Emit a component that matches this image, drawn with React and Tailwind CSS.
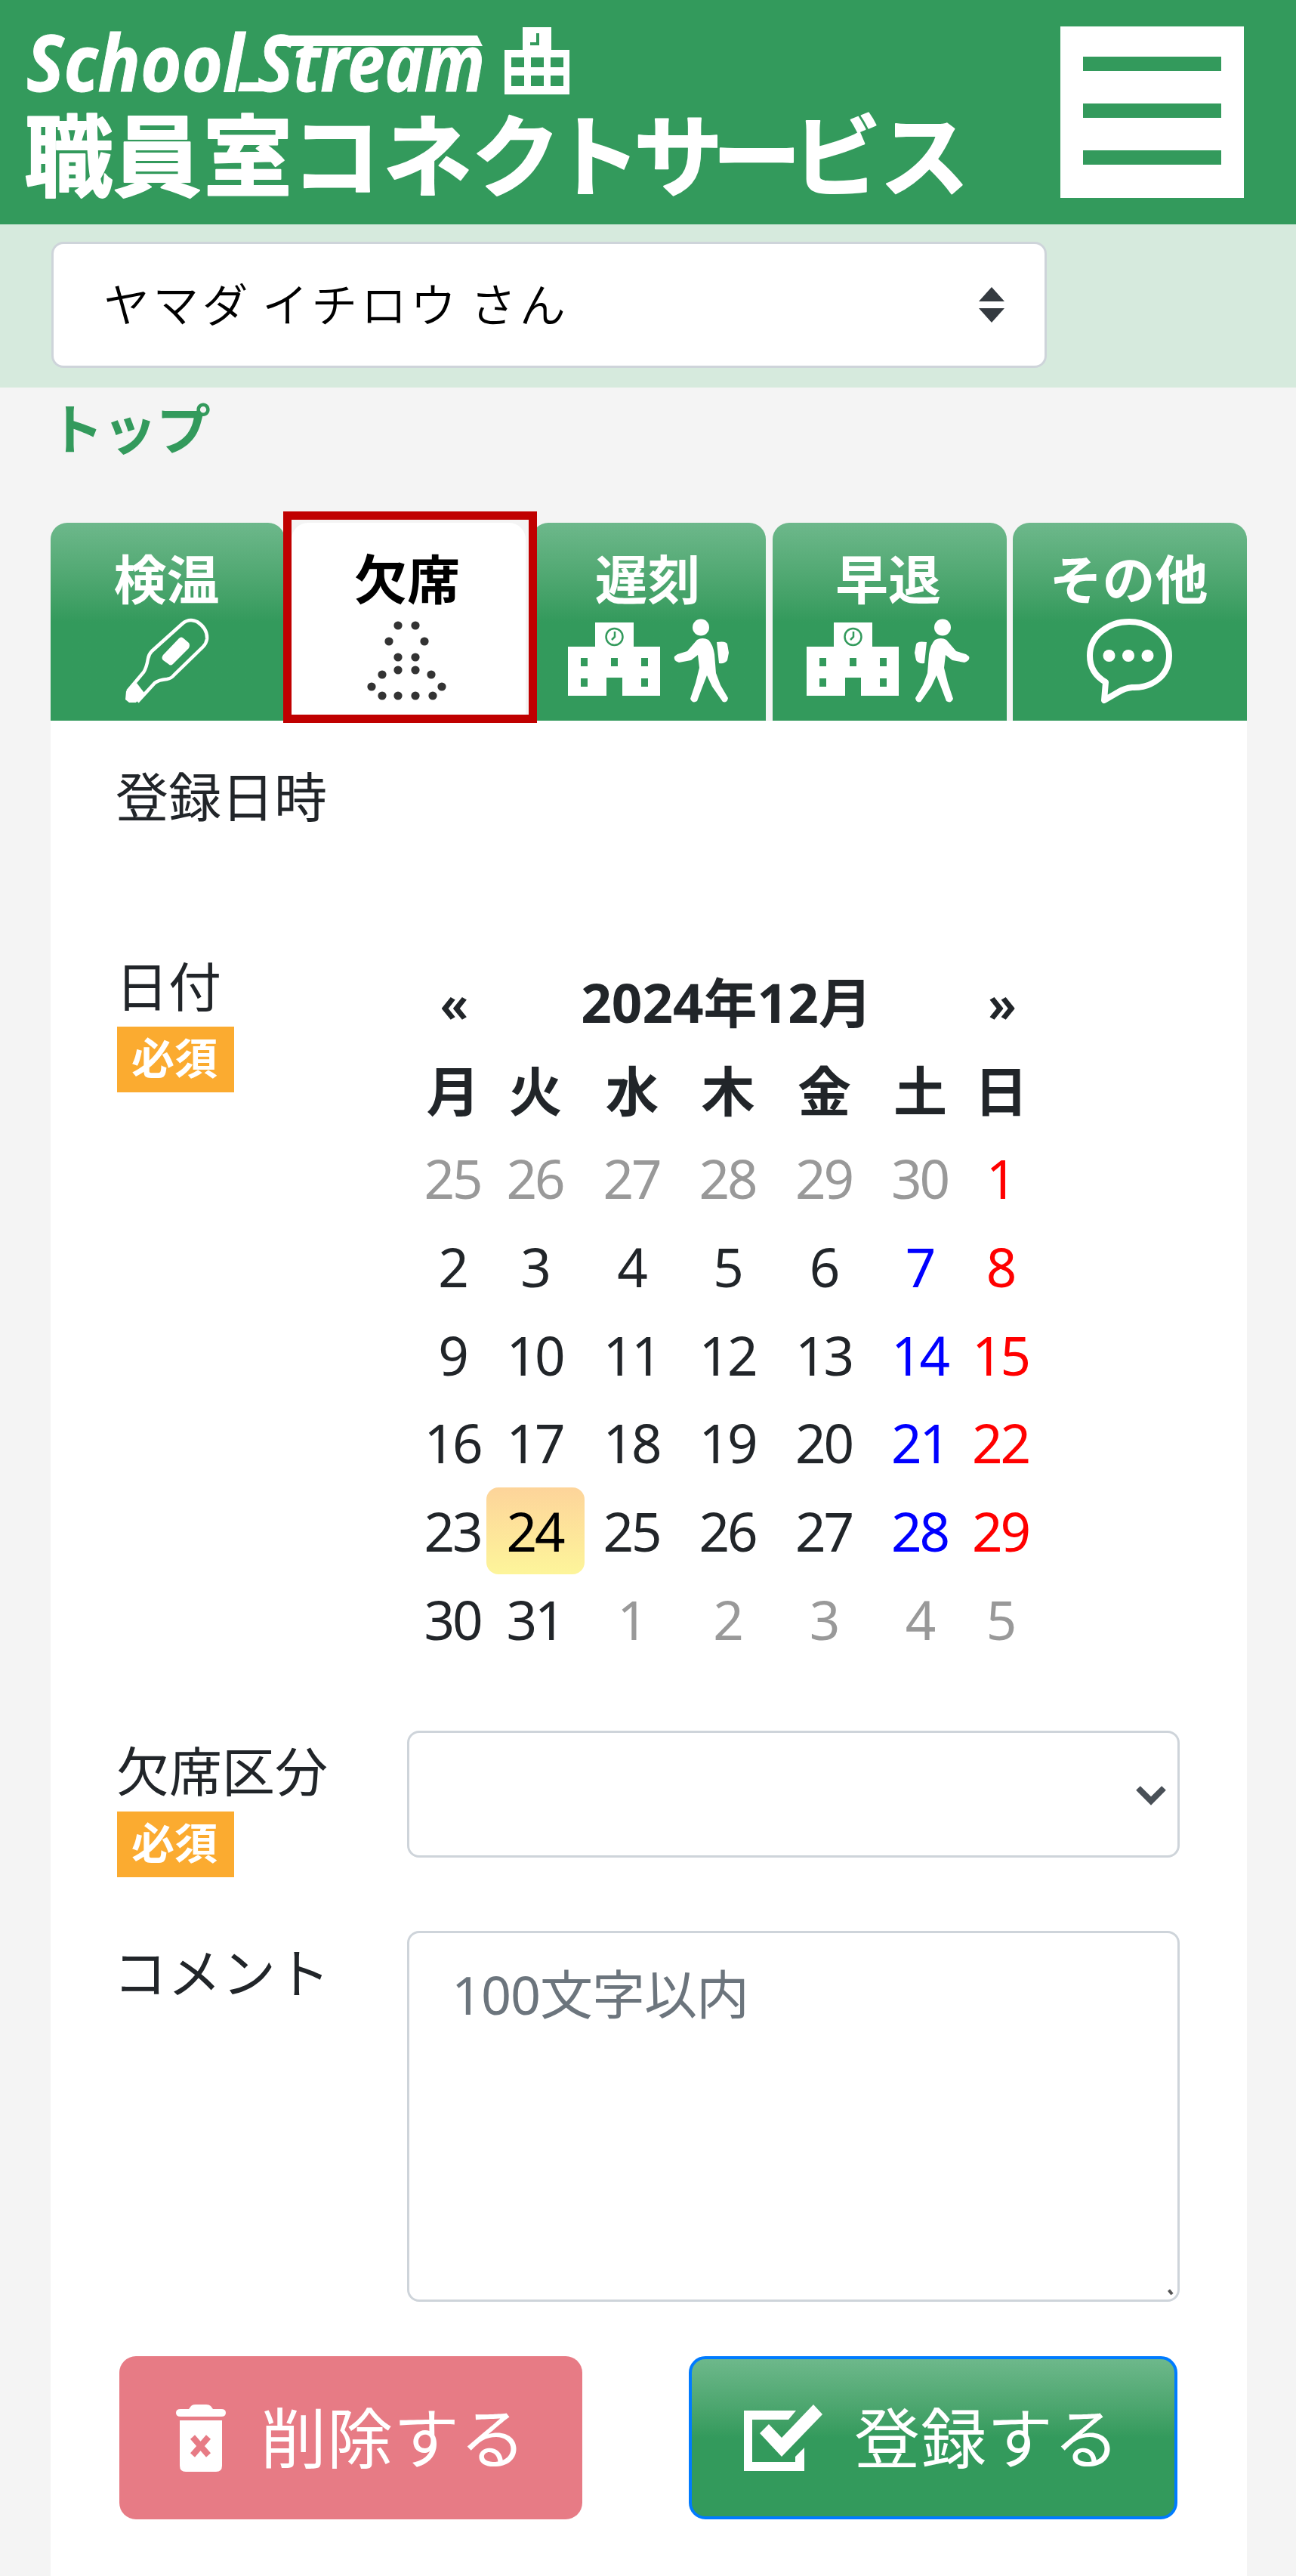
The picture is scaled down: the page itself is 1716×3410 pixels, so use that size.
import React, { useState } from 'react';

const DAY_NAMES = ['月', '火', '水', '木', '金', '土', '日'];

const WEEKS = [
  [25, 26, 27, 28, 29, 30, 1],
  [2, 3, 4, 5, 6, 7, 8],
  [9, 10, 11, 12, 13, 14, 15],
  [16, 17, 18, 19, 20, 21, 22],
  [23, 24, 25, 26, 27, 28, 29],
  [30, 31, 1, 2, 3, 4, 5],
];

function Logo() {
  return (
    <svg width="1290" height="297" viewBox="0 0 1290 297" fill="#fff" stroke="#fff" strokeWidth="0">
      <g fontFamily="'Noto Sans', sans-serif" fontWeight="700" fontStyle="italic" fontSize="104" strokeWidth="1">
        <text x="35" y="121" textLength="288" lengthAdjust="spacingAndGlyphs">School</text>
        <text x="341" y="121" textLength="301" lengthAdjust="spacingAndGlyphs">Stream</text>
      </g>
      {/* Bars running out of the S */}
      <path d="M370 47H632L639 61H362Z" />
      <path d="M318 109H366V121H315Z" />
      {/* School building */}
      <path
        fillRule="evenodd"
        d="M692 36H730V66H754V125H668V66H692ZM710 44V56H702V60H714V44ZM677 76V89H694V76ZM703 76V89H720V76ZM729 76V89H746V76ZM677 100V114H694V100ZM703 100V114H720V100ZM729 100V114H746V100Z"
      />
      <text
        y="251"
        x="32 149 269 386 507 624 730 839 943 1049 1165"
        fontFamily="'Noto Sans CJK JP', sans-serif"
        fontWeight="700"
        fontSize="118"
        strokeWidth="2"
        strokeLinejoin="round"
      >
        職員室コネクトサービス
      </text>
    </svg>
  );
}

function ThermometerIcon() {
  return (
    <svg width="112" height="114" viewBox="164 820 112 114" fill="none">
      <path
        d="M168 917L189 892Q193 886 195 874Q196 868 200 864L240 828Q249 820 260 825Q274 834 273 848Q272 854 268 858L229 896Q226 900 220 901Q209 902 204 906L181 931"
        stroke="#fff"
        strokeWidth="4.5"
      />
      <path d="M166 917L180 906L186 914L190 919L179 932H170L165 928Z" fill="#fff" />
      <path d="M215 869L236 847Q239 844 242 847L249 853Q251 856 249 860L228 881Q225 884 222 881L215 876Q212 873 215 869Z" fill="#fff" />
    </svg>
  );
}

function AbsenceIcon() {
  const dots = [
    [527, 830], [550, 830], [515, 851], [562, 851], [527, 872], [550, 872],
    [527, 889], [550, 889], [506, 895], [571, 895], [492, 911], [585, 911],
    [506, 923], [527, 923], [550, 923], [573, 923],
  ];
  return (
    <svg width="112" height="114" viewBox="483 820 112 114" fill="#333">
      {dots.map(([cx, cy]) => (
        <circle key={cx + '-' + cy} cx={cx} cy={cy} r="5.6" />
      ))}
    </svg>
  );
}

function SchoolIcon() {
  return (
    <svg width="124" height="114" viewBox="749 820 124 114" fill="#fff">
      <path
        fillRule="evenodd"
        d="M786 826H837V858H872V923H822V899H801V923H750V858H786ZM767 873V884H776V873ZM807 873V884H816V873ZM847 873V884H856V873ZM767 900V911H776V900ZM847 900V911H856V900Z"
      />
      <circle cx="811.5" cy="845" r="11" fill="none" stroke="#339a5c" strokeWidth="2.5" />
      <path d="M812 838V845L808 849" fill="none" stroke="#339a5c" strokeWidth="2.5" />
    </svg>
  );
}

// Walking child with a school bag, facing left unless flipped
function ChildIcon({ flip }) {
  return (
    <svg width="74" height="114" viewBox="889 820 74 114" fill="#fff" className={flip ? 'ml-[4px] -scale-x-100' : ''}>
      <circle cx="926" cy="832.5" r="11" />
      <path d="M921 849Q928 845 936 849Q942 855 944 868L946 893L952 909L962 926Q961 933 955 931L941 911L934 896L927 914L921 930Q915 934 912 927L919 906L924 886L922 869L913 876L897 879Q889 876 891 871L895 868L908 864Z" />
      <path d="M947 852Q960 850 961 855L963 866L961 876Q958 881 950 880Z" />
    </svg>
  );
}

function SpeechIcon() {
  return (
    <svg width="116" height="114" viewBox="1438 820 116 114">
      <path
        d="M1496 825C1523 825 1549 843 1549 870C1549 897 1526 913 1500 912Q1490 913 1482 918L1463 929L1465 905Q1444 893 1444 870C1444 843 1469 825 1496 825Z"
        fill="none"
        stroke="#fff"
        strokeWidth="8"
        strokeLinejoin="round"
      />
      <circle cx="1469.5" cy="870" r="8" fill="#fff" />
      <circle cx="1495" cy="870" r="8" fill="#fff" />
      <circle cx="1520.5" cy="870" r="8" fill="#fff" />
    </svg>
  );
}

const TABS = [
  { id: 'temp', label: '検温', icon: <ThermometerIcon /> },
  { id: 'absence', label: '欠席', icon: <AbsenceIcon /> },
  { id: 'late', label: '遅刻', icon: <><SchoolIcon /><ChildIcon /></> },
  { id: 'early', label: '早退', icon: <><SchoolIcon /><ChildIcon flip /></> },
  { id: 'other', label: 'その他', icon: <SpeechIcon /> },
];

function Tab({ tab, active, onClick }) {
  const color = active
    ? 'bg-white text-black'
    : 'bg-linear-to-b from-[#6db88b] to-[#339a5c] to-50% text-white';
  return (
    <div className="relative">
      <button
        type="button"
        onClick={onClick}
        className={`flex h-[262px] w-[310px] flex-col items-center rounded-t-[22px] pt-[30px] pr-[3px] ${color}`}
      >
        <span className="h-[96px] text-[70px] leading-[90px] font-bold">{tab.label}</span>
        <span className="flex gap-[16px]">{tab.icon}</span>
      </button>
      {active && (
        <div className="pointer-events-none absolute -top-[15px] -left-[11px] z-10 h-[280px] w-[336px] border-[11px] border-[#c00000]" />
      )}
    </div>
  );
}

function Required() {
  return (
    <span className="block h-[87px] w-[155px] bg-[#fbab30] pr-[3px] text-center text-[57px] leading-[83px] font-bold text-white">
      必須
    </span>
  );
}

function Calendar({ selected, onSelect }) {
  const dayColor = (week, col, day) => {
    if ((week === 0 && day > 7) || (week === 5 && day < 7)) return 'text-[#999]';
    if (day === selected) return 'rounded-[16px] bg-linear-to-b from-[#fdd49a] to-[#fdf59a] text-black';
    if (col === 5) return 'text-[#00f]';
    if (col === 6) return 'text-[#f00]';
    return '';
  };

  return (
    <div className="mt-[15px] ml-[16px] grid w-[813px] auto-rows-[116.7px] grid-cols-[88px_130px_126px_128px_127px_127px_87px] text-center text-[71px] leading-[115px] tracking-[-3px]">
      <button type="button" className="text-[66px] font-semibold">«</button>
      <div className="col-span-5 pr-[2px] font-bold tracking-normal">2024年12月</div>
      <button type="button" className="text-[66px] font-semibold">»</button>
      {DAY_NAMES.map((name) => (
        <div key={name} className="font-bold tracking-normal">{name}</div>
      ))}
      {WEEKS.map((days, week) =>
        days.map((day, col) => (
          <button
            type="button"
            key={week + '-' + col}
            onClick={() => onSelect(day)}
            className={`h-[115px] pr-[2px] whitespace-nowrap ${dayColor(week, col, day)}`}
          >
            {day}
          </button>
        ))
      )}
    </div>
  );
}

export default function App() {
  const [activeTab, setActiveTab] = useState('absence');
  const [selectedDay, setSelectedDay] = useState(24);
  const [comment, setComment] = useState('');

  return (
    <div className="h-[3410px] w-[1716px] overflow-hidden bg-[#f4f4f4] font-['Noto_Sans','Noto_Sans_CJK_JP',sans-serif] text-[#212529]">
      {/* Header */}
      <header className="flex h-[297px] items-start justify-between bg-[#339a5c] pr-[69px]">
        <Logo />
        <button type="button" className="mt-[35px] flex h-[227px] w-[243px] flex-col items-center gap-[43px] bg-white pt-[40px]">
          <span className="h-[19px] w-[183px] bg-[#339a5c]" />
          <span className="h-[19px] w-[183px] bg-[#339a5c]" />
          <span className="h-[19px] w-[183px] bg-[#339a5c]" />
        </button>
      </header>

      {/* Child selector */}
      <div className="h-[216px] bg-[#d6eadd] pt-[23px] pl-[68px]">
        <div className="relative h-[167px] w-[1318px]">
          <select className="h-full w-full appearance-none rounded-[16px] border-[3px] border-[#ced4da] bg-white pl-[66px] text-[61px] font-[350] tracking-[4.3px] text-black [word-spacing:-6px]">
            <option>ヤマダ イチロウ さん</option>
          </select>
          <svg className="pointer-events-none absolute top-[60px] right-[56px]" width="34" height="47" viewBox="0 0 34 47" fill="#343a40">
            <path d="M17 0L34 19H0ZM0 28H34L17 47Z" />
          </svg>
        </div>
      </div>

      <nav className="h-[179px] pt-[2px] pl-[65px]">
        <a href="#" className="text-[72px] leading-[104px] font-bold tracking-[-1px] text-[#339a5c]">トップ</a>
      </nav>

      {/* Tabs */}
      <div className="flex justify-between px-[67px] pr-[65px]">
        {TABS.map((tab) => (
          <Tab key={tab.id} tab={tab} active={tab.id === activeTab} onClick={() => setActiveTab(tab.id)} />
        ))}
      </div>

      {/* Form */}
      <form className="mr-[65px] ml-[67px] h-[2456px] bg-white pt-[49px] pl-[88px] text-[70px] leading-[105px]">
        <div className="-ml-[2px] h-[251px]">登録日時</div>

        <div className="flex h-[1036px]">
          <div className="w-[385px]">
            <div className="-ml-[2px]">日付</div>
            <Required />
          </div>
          <Calendar selected={selectedDay} onSelect={setSelectedDay} />
        </div>

        <div className="flex h-[266px]">
          <div className="w-[384px] pt-[3px]">
            <div className="-ml-[1px]">欠席区分</div>
            <Required />
          </div>
          <div className="relative mt-px h-[168px] w-[1023px]">
            <select className="h-full w-full appearance-none rounded-[16px] border-[3px] border-[#ced4da] bg-white px-[56px]">
              <option></option>
            </select>
            <svg className="pointer-events-none absolute top-[72px] right-[17px]" width="42" height="29" viewBox="0 0 42 29">
              <path d="M4 4L21 21L38 4" fill="none" stroke="#495057" strokeWidth="8" />
            </svg>
          </div>
        </div>

        <div className="flex h-[563px]">
          <div className="w-[384px] pt-[2px]">
            <div className="-ml-[5px] text-[71px] tracking-[1px]">コメント</div>
          </div>
          <div className="relative h-[491px] w-[1023px]">
            <textarea
              value={comment}
              onChange={(e) => setComment(e.target.value)}
              placeholder="100文字以内"
              className="block h-full w-full resize-none rounded-[16px] border-[3px] border-[#ced4da] px-[56px] pt-[29px] leading-[105px] tracking-[-1px] placeholder:text-[#6c757d]"
            />
            <svg className="pointer-events-none absolute right-[8px] bottom-[8px]" width="8" height="9" viewBox="0 0 8 9">
              <path d="M1.5 1.5L6 7" stroke="#555" strokeWidth="4" />
            </svg>
          </div>
        </div>

        {/* Actions */}
        <div className="flex h-[216px] pl-[3px] text-[87px] text-white">
          <button type="button" className="flex w-[613px] items-center rounded-[22px] bg-[#e77b85] pl-[75px]">
            <svg width="66" height="90" viewBox="0 0 66 90" fill="#fff" className="mt-px">
              <path d="M20 2Q22 0 26 0H40Q44 0 46 2L49 6H60Q66 6 66 11Q66 16 60 16H6Q0 16 0 11Q0 6 6 6H17Z" />
              <path d="M5 21H61V81Q61 89 53 89H13Q5 89 5 81Z" />
              <path d="M22 43L43 67M43 43L22 67" stroke="#e77b85" strokeWidth="8" />
            </svg>
            <span className="ml-[46px] tracking-[1px]">削除する</span>
          </button>
          <button
            type="button"
            className="ml-[141px] flex w-[647px] items-center rounded-[22px] border-4 border-[#007bff] bg-linear-to-b from-[#6db88b] to-[#339a5c] to-50% pl-[69px]"
          >
            <svg width="106" height="90" viewBox="0 0 106 90" fill="#fff" className="mt-px">
              <path d="M0 8H69L59 20H11V76H68V69L80 57V88H0Z" />
              <path d="M21 38L33 26L50 44L92 0L104 13L50 69Z" />
            </svg>
            <span className="ml-[40px] tracking-[1px]">登録する</span>
          </button>
        </div>
      </form>
    </div>
  );
}
